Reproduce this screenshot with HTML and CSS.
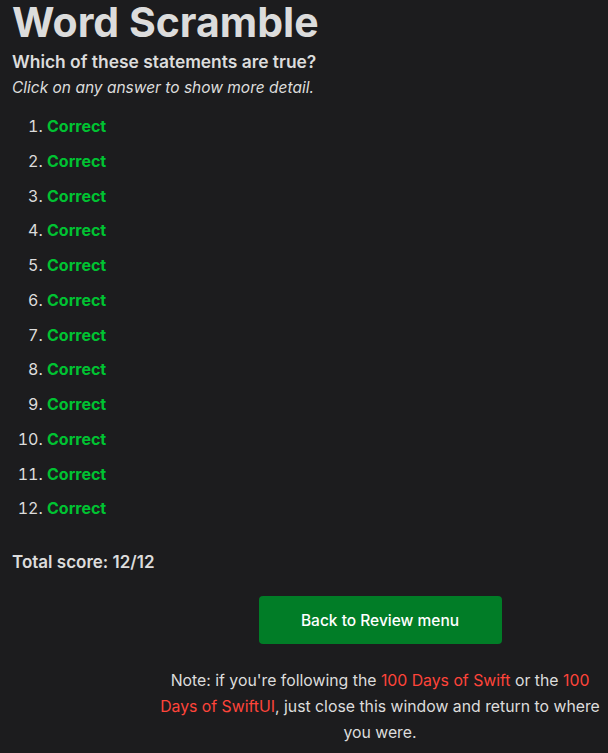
FILE: index.html
```html
<!DOCTYPE html>
<html>
<head>
<meta charset="utf-8">
<link rel="stylesheet" href="styles.css">
</head>
<body>
<div class="page">
  <h1 class="title">Word Scramble</h1>
  <p class="question">Which of these statements are true?</p>
  <p class="hint">Click on any answer to show more detail.</p>
  <ol class="answers">
    <li><span class="correct">Correct</span></li>
    <li><span class="correct">Correct</span></li>
    <li><span class="correct">Correct</span></li>
    <li><span class="correct">Correct</span></li>
    <li><span class="correct">Correct</span></li>
    <li><span class="correct">Correct</span></li>
    <li><span class="correct">Correct</span></li>
    <li><span class="correct">Correct</span></li>
    <li><span class="correct">Correct</span></li>
    <li><span class="correct">Correct</span></li>
    <li><span class="correct">Correct</span></li>
    <li><span class="correct">Correct</span></li>
  </ol>
  <p class="score">Total score: 12/12</p>
  <div class="footer">
    <a class="btn">Back to Review menu</a>
    <p class="note">Note: if you're following the <a class="link">100 Days of Swift</a> or the <a class="link">100 Days of SwiftUI</a>, just close this window and return to where you were.</p>
  </div>
</div>
</body>
</html>
```

FILE: styles.css
```css
html, body {
  margin: 0;
  padding: 0;
  background: #1c1c1e;
}
body {
  font-family: Inter, "Noto Sans", sans-serif;
  color: #dcdcdc;
}
.page {
  padding: 0 0 0 12px;
}
.title {
  margin: 0;
  font-size: 41px;
  font-weight: 700;
  line-height: 44px;
}
.question {
  margin: 6px 0 0;
  font-size: 17.4px;
  font-weight: 600;
  line-height: 24px;
}
.hint {
  margin: 3px 0 0;
  font-size: 15.5px;
  font-style: italic;
  line-height: 22px;
}
.answers {
  margin: 17px 0 0;
  padding-left: 35px;
  font-size: 16px;
  line-height: 20px;
}
.answers li {
  margin-bottom: 14.75px;
}
.correct {
  color: #00c332;
  font-weight: 700;
}
.score {
  margin: 32px 0 0;
  font-size: 17px;
  font-weight: 600;
  line-height: 24px;
}
.footer {
  margin-left: 142px;
  width: 452px;
  display: flex;
  flex-direction: column;
  align-items: center;
  text-align: center;
}
.btn {
  margin-top: 22px;
  width: 243px;
  height: 48px;
  display: flex;
  align-items: center;
  justify-content: center;
  background: #017d27;
  color: #ffffff;
  border-radius: 4px;
  font-size: 15.5px;
  font-weight: 500;
}
.note {
  margin: 24px 0 0;
  font-size: 15.8px;
  line-height: 26px;
}
.link {
  color: #ff443a;
}
```
